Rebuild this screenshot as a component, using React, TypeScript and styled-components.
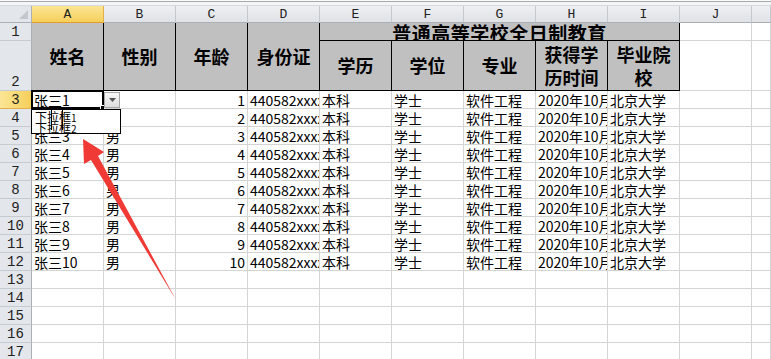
import React from "react";
import styled, { createGlobalStyle } from "styled-components";

const GlobalStyle = createGlobalStyle`
  html, body {
    margin: 0;
    padding: 0;
    background: #fff;
    overflow: hidden;
  }
  * {
    box-sizing: border-box;
  }
`;

const COLS = ["A", "B", "C", "D", "E", "F", "G", "H", "I", "J"];

const people = Array.from({ length: 10 }, (_, i) => ({
  row: i + 3,
  name: `张三${i + 1}`,
  gender: "男",
  age: i + 1,
  id: "440582xxxxx",
  edu: "本科",
  degree: "学士",
  major: "软件工程",
  date: "2020年10月",
  school: "北京大学",
}));

const emptyRows = [13, 14, 15, 16, 17];

const App = () => {
  return (
    <Page>
      <GlobalStyle />
      <TopStrip />
      <Sheet>
        <Corner />
        {COLS.map((c) => (
          <ColHead key={c} $active={c === "A"}>
            {c}
          </ColHead>
        ))}
        <ColHead />

        <RowHead>1</RowHead>
        <HeadCell $rows={2}>姓名</HeadCell>
        <HeadCell $rows={2}>性别</HeadCell>
        <HeadCell $rows={2}>年龄</HeadCell>
        <HeadCell $rows={2}>身份证</HeadCell>
        <TitleCell>普通高等学校全日制教育</TitleCell>
        <Cell />
        <Cell />

        <RowHead $bottom>2</RowHead>
        <HeadCell>学历</HeadCell>
        <HeadCell>学位</HeadCell>
        <HeadCell>专业</HeadCell>
        <HeadCell>
          获得学
          <br />
          历时间
        </HeadCell>
        <HeadCell>
          毕业院
          <br />
          校
        </HeadCell>
        <Cell />
        <Cell />

        {people.map((p) => (
          <React.Fragment key={p.row}>
            <RowHead $active={p.row === 3}>{p.row}</RowHead>
            {p.row === 3 ? (
              <ActiveCell>
                {p.name}
                <FillHandle />
                <DropButton>
                  <svg width="7" height="4" viewBox="0 0 7 4">
                    <path d="M0 0 H7 L3.5 4 Z" fill="#555" />
                  </svg>
                </DropButton>
                <DropList>
                  <DropItem>
                    下拉框<small>1</small>
                  </DropItem>
                  <DropItem>
                    下拉框<small>2</small>
                  </DropItem>
                  <CaretBox />
                </DropList>
              </ActiveCell>
            ) : (
              <Cell>{p.name}</Cell>
            )}
            <Cell>{p.gender}</Cell>
            <Cell $right>{p.age}</Cell>
            <Cell>{p.id}</Cell>
            <Cell>{p.edu}</Cell>
            <Cell>{p.degree}</Cell>
            <Cell>{p.major}</Cell>
            <Cell>{p.date}</Cell>
            <Cell>{p.school}</Cell>
            <Cell />
            <Cell />
          </React.Fragment>
        ))}

        {emptyRows.map((r) => (
          <React.Fragment key={r}>
            <RowHead>{r}</RowHead>
            {COLS.map((c) => (
              <Cell key={c} />
            ))}
            <Cell />
          </React.Fragment>
        ))}
      </Sheet>

      <ArrowLayer viewBox="0 0 771 359" width="771" height="359">
        <polygon
          points="83,139 104,152 98,156 176,300 91,160 84,164"
          fill="#f03a35"
        />
      </ArrowLayer>
    </Page>
  );
};

export default App;

const Page = styled.div`
  position: relative;
  width: 771px;
  height: 359px;
  overflow: hidden;
  background: #fff;
`;

const TopStrip = styled.div`
  height: 6px;
  background: linear-gradient(
    to bottom,
    #fbfbfb 0 1px,
    #a7abb0 1px 2px,
    #f4f5f6 2px 5px,
    #d6d9dd 5px
  );
`;

const Sheet = styled.div`
  display: grid;
  grid-template-columns: 32px repeat(10, 72px) 1fr;
  grid-template-rows: 17px 18px 50px repeat(15, 18px);
  font-family: "Noto Sans CJK SC", "Noto Sans", sans-serif;
`;

const Corner = styled.div`
  position: relative;
  background: #e3e6ea;
  border-right: 1px solid #a9b0b8;
  border-bottom: 1px solid #a9b0b8;
  &::after {
    content: "";
    position: absolute;
    right: 3px;
    bottom: 3px;
    border-left: 9px solid transparent;
    border-bottom: 9px solid #c4c8cd;
  }
`;

const ColHead = styled.div<{ $active?: boolean }>`
  display: flex;
  align-items: center;
  justify-content: center;
  font-family: "Liberation Mono", "DejaVu Sans Mono", monospace;
  font-size: 13px;
  color: #222;
  background: ${(p) =>
    p.$active
      ? "linear-gradient(to bottom, #fbe696, #f6cf5a)"
      : "linear-gradient(to bottom, #eef0f3, #dfe2e6)"};
  border-right: 1px solid ${(p) => (p.$active ? "#e2b04a" : "#c3c8ce")};
  border-bottom: 1px solid ${(p) => (p.$active ? "#e59b2e" : "#a9b0b8")};
`;

const RowHead = styled.div<{ $active?: boolean; $bottom?: boolean }>`
  display: flex;
  align-items: ${(p) => (p.$bottom ? "flex-end" : "center")};
  justify-content: center;
  font-family: "Liberation Mono", "DejaVu Sans Mono", monospace;
  font-size: 14px;
  line-height: 16px;
  color: #222;
  background: ${(p) =>
    p.$active
      ? "linear-gradient(to right, #fbe696, #f6cf5a)"
      : "#e3e6ea"};
  border-right: 1px solid ${(p) => (p.$active ? "#e59b2e" : "#a9b0b8")};
  border-bottom: 1px solid ${(p) => (p.$active ? "#e2b04a" : "#c6cbd1")};
`;

const Cell = styled.div<{ $right?: boolean }>`
  min-width: 0;
  overflow: hidden;
  white-space: nowrap;
  padding: 1px 2px 0;
  font-size: 14px;
  line-height: 17px;
  color: #000;
  text-align: ${(p) => (p.$right ? "right" : "left")};
  border-right: 1px solid #d4d4d4;
  border-bottom: 1px solid #d4d4d4;
`;

const HeadCell = styled.div<{ $rows?: number }>`
  grid-row: span ${(p) => p.$rows ?? 1};
  display: flex;
  align-items: center;
  justify-content: center;
  text-align: center;
  font-size: 18px;
  font-weight: 700;
  line-height: 23px;
  color: #000;
  background: #c0c0c0;
  border-right: 1px solid #000;
  border-bottom: 1px solid #000;
`;

const TitleCell = styled(HeadCell)`
  grid-column: span 5;
  align-items: flex-start;
  overflow: hidden;
  white-space: nowrap;
  font-size: 19px;
  letter-spacing: 0.5px;
  line-height: 20px;
`;

const ActiveCell = styled(Cell)`
  position: relative;
  overflow: visible;
  z-index: 3;
  &::before {
    content: "";
    position: absolute;
    left: -1px;
    top: -1px;
    right: -1px;
    bottom: -1px;
    border: 2px solid #000;
    pointer-events: none;
  }
`;

const FillHandle = styled.span`
  position: absolute;
  right: -2px;
  bottom: -2px;
  width: 5px;
  height: 5px;
  background: #000;
  border: 1px solid #fff;
`;

const DropButton = styled.span`
  position: absolute;
  left: 72px;
  top: 1px;
  width: 16px;
  height: 16px;
  display: flex;
  align-items: center;
  justify-content: center;
  background: linear-gradient(to bottom, #f7f7f7, #dcdcdc);
  border: 1px solid #a5a5a5;
`;

const DropList = styled.div`
  position: absolute;
  left: -1px;
  top: 18px;
  width: 90px;
  height: 25px;
  padding: 1px 0 0 3px;
  background: #fff;
  border: 1px solid #000;
`;

const DropItem = styled.div`
  font-size: 12px;
  line-height: 11px;
  height: 11px;
  small {
    font-size: 10px;
  }
`;

const CaretBox = styled.span`
  position: absolute;
  left: 19px;
  top: -1px;
  width: 12px;
  height: 21px;
  border: 1px solid #000;
  border-bottom: none;
`;

const ArrowLayer = styled.svg`
  position: absolute;
  left: 0;
  top: 0;
  pointer-events: none;
  z-index: 5;
`;
